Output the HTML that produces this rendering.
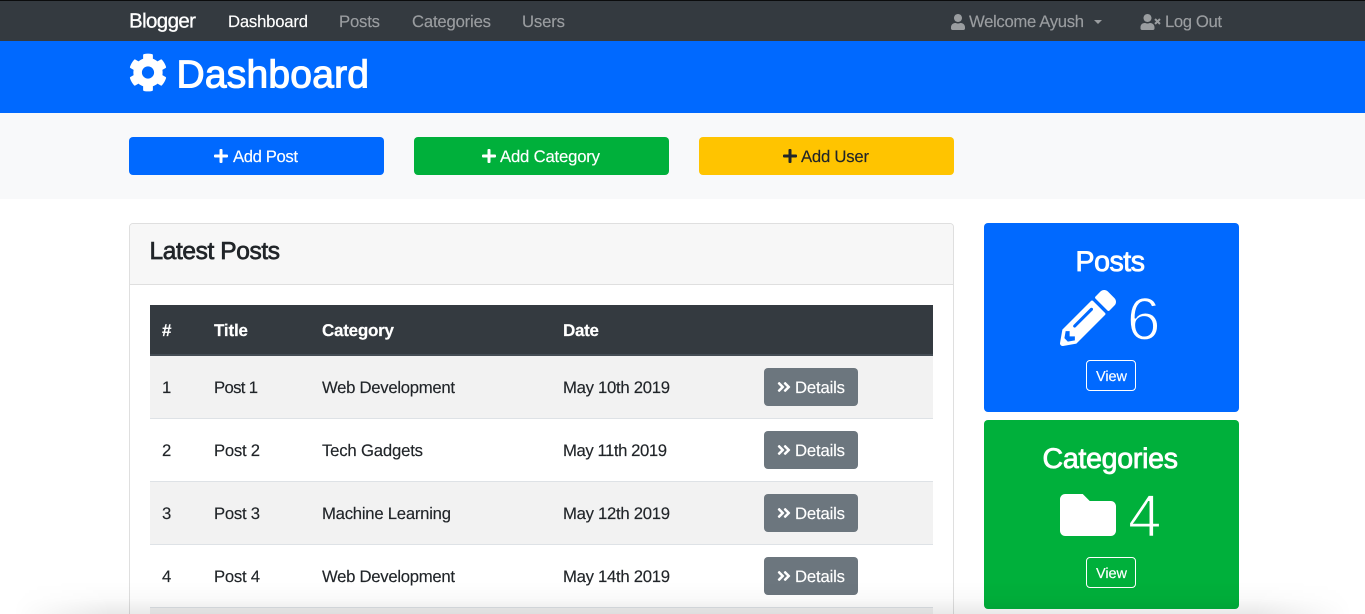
<!DOCTYPE html>
<html lang="en">
<head>
<meta charset="utf-8">
<title>Blogger Dashboard</title>
<style>
html,body{margin:0;padding:0;width:1365px;height:614px;overflow:hidden;background:#fff}
#wrap{position:relative;width:1365px;height:614px;overflow:hidden}
svg.page{position:absolute;left:0;top:0;display:block}
text{font-family:"Liberation Sans",sans-serif;text-rendering:geometricPrecision;font-size:16.7px;stroke-width:.15;stroke:currentColor}
.d{fill:#212529;color:#212529}
.w{fill:#fff;color:#fff}
.g{fill:#9a9da0;color:#9a9da0}
.h{font-weight:700;font-size:17px;stroke-width:.2}
</style>
</head>
<body>
<div id="wrap">
<svg class="page" width="1365" height="614" viewBox="0 0 1365 614" xmlns="http://www.w3.org/2000/svg">
<defs>
<linearGradient id="sv" x1="0" y1="0" x2="0" y2="1">
<stop offset="0" stop-color="#000" stop-opacity="0"/>
<stop offset=".5" stop-color="#000" stop-opacity=".02"/>
<stop offset="1" stop-color="#000" stop-opacity=".085"/>
</linearGradient>
<linearGradient id="sh" x1="0" y1="0" x2="1" y2="0">
<stop offset=".01" stop-color="#fff" stop-opacity="0"/>
<stop offset=".08" stop-color="#fff" stop-opacity="1"/>
<stop offset=".92" stop-color="#fff" stop-opacity="1"/>
<stop offset=".99" stop-color="#fff" stop-opacity="0"/>
</linearGradient>
<mask id="sm" maskUnits="userSpaceOnUse" x="0" y="582" width="1365" height="32"><rect x="0" y="582" width="1365" height="32" fill="url(#sh)"/></mask>
<path id="plus" d="M416 208H272V64c0-17.67-14.33-32-32-32h-32c-17.67 0-32 14.33-32 32v144H32c-17.67 0-32 14.33-32 32v32c0 17.67 14.33 32 32 32h144v144c0 17.67 14.33 32 32 32h32c17.67 0 32-14.33 32-32V304h144c17.67 0 32-14.33 32-32v-32c0-17.67-14.33-32-32-32z"/>
<path id="dbl" d="M224.3 273l-136 136c-9.4 9.4-24.6 9.4-33.9 0l-22.6-22.6c-9.4-9.4-9.4-24.6 0-33.9l96.4-96.4-96.4-96.4c-9.4-9.4-9.4-24.6 0-33.9L54.3 103c9.4-9.4 24.6-9.4 33.9 0l136 136c9.5 9.4 9.5 24.6.1 34zm192-34l-136-136c-9.4-9.4-24.6-9.4-33.9 0l-22.6 22.6c-9.4 9.4-9.4 24.6 0 33.9l96.4 96.4-96.4 96.4c-9.4 9.4-9.4 24.6 0 33.9l22.6 22.6c9.4 9.4 24.6 9.4 33.9 0l136-136c9.4-9.2 9.4-24.4 0-33.8z"/>
<path id="user" d="M224 256c70.7 0 128-57.3 128-128S294.7 0 224 0 96 57.3 96 128s57.3 128 128 128zm89.6 32h-16.7c-22.2 10.2-46.9 16-72.9 16s-50.6-5.8-72.9-16h-16.7C60.2 288 0 348.2 0 422.4V464c0 26.5 21.5 48 48 48h352c26.5 0 48-21.5 48-48v-41.6c0-74.2-60.2-134.4-134.4-134.4z"/>
</defs>

<!-- backgrounds -->
<rect width="1365" height="614" fill="#fff"/>
<rect width="1365" height="41" fill="#343a40"/>
<rect width="1365" height="1" fill="#0b0c0d"/>
<rect y="41" width="1365" height="72" fill="#0069ff"/>
<rect y="113" width="1365" height="86" fill="#f8f9fa"/>

<!-- navbar -->
<text x="129" y="27.5" style="font-size:20.5px;stroke-width:.3" class="w" textLength="67">Blogger</text>
<text x="228" y="27" class="w" textLength="80">Dashboard</text>
<text x="339" y="27" class="g" textLength="41">Posts</text>
<text x="412" y="27" class="g" textLength="79">Categories</text>
<text x="522" y="27" class="g" textLength="43">Users</text>
<svg x="951" y="14" width="14" height="16" viewBox="0 0 448 512"><use href="#user" fill="#9a9da0"/></svg>
<text x="969" y="27" class="g" textLength="115">Welcome Ayush</text>
<path d="M1094 20h8l-4 4z" fill="#9a9da0"/>
<svg x="1140" y="14" width="21" height="16" viewBox="0 0 640 512"><path fill="#9a9da0" d="M589.6 240l45.6-45.6c6.3-6.3 6.3-16.5 0-22.8l-22.8-22.8c-6.3-6.3-16.5-6.3-22.8 0L544 194.4l-45.6-45.6c-6.3-6.3-16.5-6.3-22.8 0l-22.8 22.8c-6.3 6.3-6.3 16.5 0 22.8l45.6 45.6-45.6 45.6c-6.3 6.3-6.3 16.5 0 22.8l22.8 22.8c6.3 6.3 16.5 6.3 22.8 0l45.6-45.6 45.6 45.6c6.3 6.3 16.5 6.3 22.8 0l22.8-22.8c6.3-6.3 6.3-16.5 0-22.8L589.6 240zM224 256c70.7 0 128-57.3 128-128S294.7 0 224 0 96 57.3 96 128s57.3 128 128 128zm89.6 32h-16.7c-22.2 10.2-46.9 16-72.9 16s-50.6-5.8-72.9-16h-16.7C60.2 288 0 348.2 0 422.4V464c0 26.5 21.5 48 48 48h352c26.5 0 48-21.5 48-48v-41.6c0-74.2-60.2-134.4-134.4-134.4z"/></svg>
<text x="1165" y="27" class="g" textLength="57">Log Out</text>

<!-- page header -->
<svg x="128.500" y="53" width="39" height="39" viewBox="0 0 512 512"><path fill="#fff" d="M487.4 315.7l-42.6-24.6c4.3-23.2 4.3-47 0-70.2l42.6-24.6c4.9-2.8 7.1-8.6 5.500-14-11.1-35.6-30-67.8-54.7-94.6-3.8-4.1-10-5.1-14.8-2.3L380.8 110c-17.9-15.4-38.5-27.3-60.8-35.1V25.8c0-5.6-3.9-10.5-9.4-11.7-36.7-8.2-74.3-7.8-109.2 0-5.5 1.2-9.4 6.1-9.4 11.7V75c-22.2 7.9-42.8 19.8-60.8 35.1L88.7 85.5c-4.9-2.8-11-1.9-14.8 2.3-24.7 26.7-43.6 58.9-54.7 94.6-1.7 5.4.6 11.2 5.5 14L67.3 221c-4.3 23.2-4.3 47 0 70.2l-42.6 24.6c-4.9 2.8-7.1 8.6-5.5 14 11.1 35.6 30 67.8 54.7 94.6 3.8 4.1 10 5.1 14.8 2.3l42.6-24.6c17.9 15.4 38.5 27.3 60.8 35.1v49.2c0 5.6 3.9 10.5 9.4 11.7 36.7 8.2 74.3 7.8 109.2 0 5.5-1.2 9.4-6.1 9.4-11.7v-49.2c22.2-7.9 42.8-19.8 60.8-35.1l42.6 24.6c4.9 2.8 11 1.9 14.8-2.3 24.7-26.7 43.6-58.9 54.7-94.6 1.5-5.5-.7-11.3-5.6-14.1zM256 336c-44.1 0-80-35.9-80-80s35.9-80 80-80 80 35.9 80 80-35.9 80-80 80z"/></svg>
<text x="176.500" y="87.500" style="font-size:39px;stroke-width:1.1" class="w" textLength="192.500">Dashboard</text>

<!-- action buttons -->
<rect x="129" y="137" width="255" height="38" rx="4" fill="#0069ff"/>
<svg x="214" y="149" width="14" height="14" viewBox="0 32 448 448"><use href="#plus" fill="#fff"/></svg>
<text x="233" y="162" class="w" textLength="65">Add Post</text>
<rect x="414" y="137" width="255" height="38" rx="4" fill="#00b03b"/>
<svg x="482" y="149" width="14" height="14" viewBox="0 32 448 448"><use href="#plus" fill="#fff"/></svg>
<text x="500" y="162" class="w" textLength="100">Add Category</text>
<rect x="699" y="137" width="255" height="38" rx="4" fill="#ffc400"/>
<svg x="783" y="149" width="14" height="14" viewBox="0 32 448 448"><use href="#plus" fill="#212529"/></svg>
<text x="801" y="162" class="d" textLength="68">Add User</text>

<!-- latest posts card -->
<path d="M129.500 614V227a3.500 3.500 0 0 1 3.500-3.500h817a3.500 3.500 0 0 1 3.500 3.500V614" fill="#fff" stroke="#dfdfdf"/>
<path d="M130 285V227a3 3 0 0 1 3-3h817a3 3 0 0 1 3 3v58z" fill="#f7f7f7"/>
<rect x="130" y="284" width="823" height="1" fill="#dfdfdf"/>
<text x="149.500" y="259" style="font-size:24.500px;stroke-width:.7" class="d" textLength="130.500">Latest Posts</text>

<!-- table -->
<rect x="150" y="305" width="783" height="51" fill="#343a40"/>
<rect x="150" y="354" width="783" height="2" fill="#454d55"/>
<text x="162" y="336" class="w h" textLength="10">#</text>
<text x="214" y="336" class="w h" textLength="34">Title</text>
<text x="322" y="336" class="w h" textLength="72">Category</text>
<text x="563" y="336" class="w h" textLength="36">Date</text>

<rect x="150" y="356" width="783" height="62" fill="#f2f2f2"/>
<rect x="150" y="418" width="783" height="1" fill="#dee2e6"/>
<rect x="150" y="481" width="783" height="1" fill="#dee2e6"/>
<rect x="150" y="482" width="783" height="62" fill="#f2f2f2"/>
<rect x="150" y="544" width="783" height="1" fill="#dee2e6"/>
<rect x="150" y="607" width="783" height="1" fill="#dee2e6"/>
<rect x="150" y="608" width="783" height="6" fill="#f2f2f2"/>

<text x="162" y="393" class="d">1</text>
<text x="214" y="393" class="d" textLength="44">Post 1</text>
<text x="322" y="393" class="d" textLength="133">Web Development</text>
<text x="563" y="393" class="d" textLength="107">May 10th 2019</text>
<rect x="764" y="368" width="94" height="38" rx="4" fill="#6c767e"/>
<svg x="777" y="380" width="14" height="14" viewBox="0 32 448 448"><use href="#dbl" fill="#fff"/></svg>
<text x="795" y="393" class="w" textLength="50">Details</text>

<text x="162" y="456" class="d">2</text>
<text x="214" y="456" class="d" textLength="46">Post 2</text>
<text x="322" y="456" class="d" textLength="101">Tech Gadgets</text>
<text x="563" y="456" class="d" textLength="104">May 11th 2019</text>
<rect x="764" y="431" width="94" height="38" rx="4" fill="#6c767e"/>
<svg x="777" y="443" width="14" height="14" viewBox="0 32 448 448"><use href="#dbl" fill="#fff"/></svg>
<text x="795" y="456" class="w" textLength="50">Details</text>

<text x="162" y="519" class="d">3</text>
<text x="214" y="519" class="d" textLength="46">Post 3</text>
<text x="322" y="519" class="d" textLength="129">Machine Learning</text>
<text x="563" y="519" class="d" textLength="107">May 12th 2019</text>
<rect x="764" y="494" width="94" height="38" rx="4" fill="#6c767e"/>
<svg x="777" y="506" width="14" height="14" viewBox="0 32 448 448"><use href="#dbl" fill="#fff"/></svg>
<text x="795" y="519" class="w" textLength="50">Details</text>

<text x="162" y="582" class="d">4</text>
<text x="214" y="582" class="d" textLength="46">Post 4</text>
<text x="322" y="582" class="d" textLength="133">Web Development</text>
<text x="563" y="582" class="d" textLength="107">May 14th 2019</text>
<rect x="764" y="557" width="94" height="38" rx="4" fill="#6c767e"/>
<svg x="777" y="569" width="14" height="14" viewBox="0 32 448 448"><use href="#dbl" fill="#fff"/></svg>
<text x="795" y="582" class="w" textLength="50">Details</text>

<!-- posts stat card -->
<rect x="984" y="223" width="255" height="189" rx="4" fill="#0069ff"/>
<text x="1075.500" y="271" style="font-size:28.500px;stroke-width:.8" class="w" textLength="69.500">Posts</text>
<svg x="1060" y="290" width="56" height="56" viewBox="0 0 512 512"><path fill="#fff" d="M497.9 142.1l-46.1 46.1c-4.7 4.7-12.3 4.7-17 0l-111-111c-4.7-4.7-4.7-12.3 0-17l46.1-46.1c18.7-18.7 49.1-18.7 67.9 0l60.1 60.1c18.8 18.7 18.8 49.1 0 67.9zM284.2 99.8L21.6 362.4.4 483.9c-2.9 16.4 11.4 30.6 27.8 27.8l121.5-21.3 262.6-262.6c4.7-4.7 4.7-12.3 0-17l-111-111c-4.8-4.7-12.4-4.7-17.1 0zM124.1 339.9c-5.5-5.5-5.5-14.3 0-19.8l154-154c5.5-5.5 14.3-5.500 19.8 0s5.5 14.3 0 19.8l-154 154c-5.5 5.5-14.3 5.500-19.8 0zM88 424h48v36.3l-64.5 11.3-31.1-31.1L51.7 376H88v48z"/></svg>
<text x="1127" y="339.500" style="font-size:60px;color:#0069ff;stroke:#0069ff;stroke-width:1.4" fill="#fff">6</text>
<rect x="1086.500" y="360.500" width="49" height="30" rx="3.500" fill="none" stroke="#fff"/>
<text x="1096" y="381" style="font-size:14.500px" class="w" textLength="31">View</text>

<!-- categories stat card -->
<rect x="984" y="420" width="255" height="189" rx="4" fill="#00b03b"/>
<text x="1042.500" y="468" style="font-size:28.500px;stroke-width:.8" class="w" textLength="135.500">Categories</text>
<svg x="1060" y="487" width="56" height="56" viewBox="0 0 512 512"><path fill="#fff" d="M464 128H272l-64-64H48C21.490 64 0 85.490 0 112v288c0 26.510 21.490 48 48 48h416c26.510 0 48-21.490 48-48V176c0-26.510-21.490-48-48-48z"/></svg>
<text x="1128" y="536.500" style="font-size:60px;color:#00b03b;stroke:#00b03b;stroke-width:1.4" fill="#fff">4</text>
<rect x="1086.500" y="557.500" width="49" height="30" rx="3.500" fill="none" stroke="#fff"/>
<text x="1096" y="578" style="font-size:14.500px" class="w" textLength="31">View</text>

<!-- bottom window shadow -->
<rect x="0" y="582" width="1365" height="32" fill="url(#sv)" mask="url(#sm)"/>
</svg>
</div>
</body>
</html>
